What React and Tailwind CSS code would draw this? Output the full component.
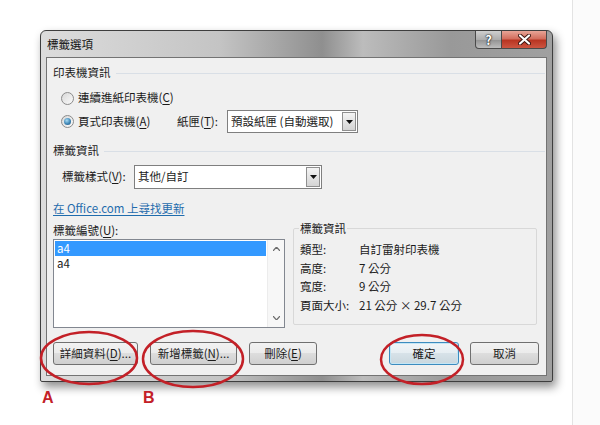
import React from "react";

const Key = ({ k }) => <span className="underline underline-offset-2">{k}</span>;

const Header = ({ text }) => (
    <div className="flex h-[18px] items-center">
        <span>{text}</span>
        <div className="ml-[5px] h-px flex-1 bg-[#d9dfe6]" />
    </div>
);

const Radio = ({ checked }) => (
    <span className="flex h-[13px] w-[13px] items-center justify-center rounded-full border border-[#8b8b8b] bg-[linear-gradient(135deg,#d8d8d8,#fbfbfb)]">
        {checked && (
            <span className="h-[7px] w-[7px] rounded-full bg-[radial-gradient(circle_at_40%_35%,#a9dcf5_0%,#3e86b6_55%,#1d4f78_100%)]" />
        )}
    </span>
);

const Combo = ({ value, width }) => (
    <div className={`flex h-full border border-[#7f7f7f] bg-white ${width}`}>
        <div className="flex flex-1 items-center pl-[3px]">{value}</div>
        <div className="m-[1px] flex w-[14px] items-center justify-center border border-[#8f8f8f] bg-[linear-gradient(180deg,#f4f4f4,#d4d4d4)]">
            <svg width="7" height="4" viewBox="0 0 7 4">
                <path d="M0 0h7L3.5 4z" fill="#111" />
            </svg>
        </div>
    </div>
);

const Button = ({ children, width, def }) => (
    <div
        className={`flex h-[23px] items-center justify-center rounded-[3px] border ${width} ${
            def
                ? "border-[#3c8cbf] bg-[linear-gradient(180deg,#f1f5f7_0%,#e6eef2_48%,#d7e2e8_50%,#c9d7de_100%)] shadow-[inset_0_0_0_1px_#c4e6f5]"
                : "border-[#707070] bg-[linear-gradient(180deg,#f2f2f2_0%,#ebebeb_48%,#dddddd_50%,#cfcfcf_100%)]"
        }`}
    >
        {children}
    </div>
);

const Window = () => (
    <div className="w-[513px] rounded-t-[6px] rounded-b-[2px] border border-[#3e3e3e] bg-[linear-gradient(90deg,#dcdcdc_0%,#c4c4c4_35%,#8f8f8f_55%,#bcbcbc_63%,#999999_80%,#a0a0a0_100%)] shadow-[3px_5px_10px_rgba(0,0,0,0.45)]">
        {/* title bar */}
        <div className="flex h-[26px] items-start">
            <div className="pl-[6px] pt-[5px] leading-[16px] text-[#111]">標籤選項</div>
            <div className="ml-auto mr-[5px] flex">
                <div className="flex h-[18px] w-[27px] items-center justify-center rounded-bl-[4px] border border-t-0 border-[#4a4a4a] bg-[linear-gradient(180deg,#cfcfcf_0%,#adadad_50%,#959595_55%,#bdbdbd_100%)] text-[13px] font-bold text-white [text-shadow:0_0_1px_#000,0_0_2px_#000]">
                    ?
                </div>
                <div className="flex h-[18px] w-[45px] items-center justify-center rounded-br-[4px] border border-l-0 border-t-0 border-[#4a4a4a] bg-[linear-gradient(180deg,#e8a597_0%,#d36f5e_45%,#b93522_55%,#cc5541_100%)]">
                    <svg width="13" height="11" viewBox="0 0 13 11">
                        <path d="M2 1.5l9 8M11 1.5l-9 8" stroke="#3a1510" strokeWidth="4" strokeLinecap="round" />
                        <path d="M2 1.5l9 8M11 1.5l-9 8" stroke="#fff" strokeWidth="2.2" strokeLinecap="round" />
                    </svg>
                </div>
            </div>
        </div>

        {/* client area */}
        <div className="mb-[5px] ml-[5px] mr-[5px] flex flex-col border border-[#737373] bg-[#f0f0f0] pl-[6px] pr-[1px]">
            <div className="mt-[6px]">
                <Header text="印表機資訊" />
            </div>

            <div className="mt-[7px] flex h-[18px] items-center pl-[8px]">
                <Radio />
                <span className="ml-[4px]">
                    連續進紙印表機(<Key k="C" />)
                </span>
            </div>

            <div className="mt-[3px] flex h-[23px] items-center pl-[8px]">
                <div className="flex w-[116px] items-center">
                    <Radio checked />
                    <span className="ml-[4px]">
                        頁式印表機(<Key k="A" />)
                    </span>
                </div>
                <div className="w-[50px]">
                    紙匣(<Key k="T" />):
                </div>
                <Combo value="預設紙匣 (自動選取)" width="w-[131px]" />
            </div>

            <div className="mt-[9px]">
                <Header text="標籤資訊" />
            </div>

            <div className="mt-[5px] flex h-[24px] items-center pl-[9px]">
                <div className="w-[72px]">
                    標籤樣式(<Key k="V" />):
                </div>
                <Combo value="其他/自訂" width="w-[188px]" />
            </div>

            <div className="mt-[12px] flex h-[16px] items-center">
                <span className="text-[#1f6cad] underline underline-offset-2">在 Office.com 上尋找更新</span>
            </div>

            <div className="mt-[5px] flex">
                <div className="flex w-[232px] flex-col">
                    <div className="flex h-[17px] items-center">
                        標籤編號(<Key k="U" />):
                    </div>
                    <div className="flex h-[89px] border border-[#828790] bg-white">
                        <div className="flex-1 p-[1px] leading-[15px]">
                            <div className="h-[15px] bg-[#3399ff] pl-[2px] text-white">a4</div>
                            <div className="h-[15px] pl-[2px]">a4</div>
                        </div>
                        <div className="flex w-[17px] flex-col items-center justify-between border-l border-[#ececec] bg-[#f7f7f7] py-[7px]">
                            <svg width="7" height="4" viewBox="0 0 7 4">
                                <path d="M0 4L3.5 0 7 4" fill="none" stroke="#6d6d6d" strokeWidth="1.2" />
                            </svg>
                            <svg width="7" height="4" viewBox="0 0 7 4">
                                <path d="M0 0l3.5 4L7 0" fill="none" stroke="#6d6d6d" strokeWidth="1.2" />
                            </svg>
                        </div>
                    </div>
                </div>

                <fieldset className="ml-[8px] h-[103px] w-[244px] min-w-0 rounded-[2px] border border-[#d8d8d8] pl-[6px]">
                    <legend className="ml-[-1px] px-[1px] leading-[12px]">標籤資訊</legend>
                    <div className="grid grid-cols-[59px_1fr] pt-[6px] leading-[18.5px]">
                        <span>類型:</span>
                        <span>自訂雷射印表機</span>
                        <span>高度:</span>
                        <span>7 公分</span>
                        <span>寬度:</span>
                        <span>9 公分</span>
                        <span>頁面大小:</span>
                        <span>21 公分 × 29.7 公分</span>
                    </div>
                </fieldset>
            </div>

            <div className="mb-[10px] mt-[14px] flex">
                <Button width="w-[85px]">
                    <span>
                        詳細資料(<Key k="D" />)...
                    </span>
                </Button>
                <div className="ml-[12px]">
                    <Button width="w-[87px]">
                        <span>
                            新增標籤(<Key k="N" />)...
                        </span>
                    </Button>
                </div>
                <div className="ml-[12px]">
                    <Button width="w-[68px]">
                        <span>
                            刪除(<Key k="E" />)
                        </span>
                    </Button>
                </div>
                <div className="ml-auto">
                    <Button width="w-[70px]" def>
                        確定
                    </Button>
                </div>
                <div className="ml-[11px] mr-[6px]">
                    <Button width="w-[69px]">取消</Button>
                </div>
            </div>
        </div>
    </div>
);

const App = () => {
    return (
        <div className="relative h-[425px] w-[600px] overflow-hidden bg-white font-['Noto_Sans_CJK_TC','Noto_Sans',sans-serif] text-[11.5px] text-[#1b1b1b]">
            <div className="flex h-full">
                <div className="w-[572px] pl-[40px] pt-[30px]">
                    <Window />
                </div>
                <div className="w-px bg-[#e3e3e3]" />
                <div className="flex-1 bg-[#fbfbfb]" />
            </div>

            {/* red annotations drawn over the dialog */}
            <svg className="pointer-events-none absolute left-0 top-0" width="600" height="425">
                <ellipse cx="89" cy="358" rx="48" ry="26" fill="none" stroke="#c32027" strokeWidth="2.5" />
                <ellipse cx="193" cy="359" rx="50" ry="28" fill="none" stroke="#c32027" strokeWidth="2.5" />
                <ellipse cx="422" cy="359.5" rx="41" ry="24.5" fill="none" stroke="#c32027" strokeWidth="2.5" />
            </svg>
            <div className="absolute left-[42px] top-[386px] font-['Liberation_Sans',sans-serif] text-[16px] font-bold text-[#c32027]">
                A
            </div>
            <div className="absolute left-[143px] top-[386px] font-['Liberation_Sans',sans-serif] text-[16px] font-bold text-[#c32027]">
                B
            </div>
        </div>
    );
};

export default App;
